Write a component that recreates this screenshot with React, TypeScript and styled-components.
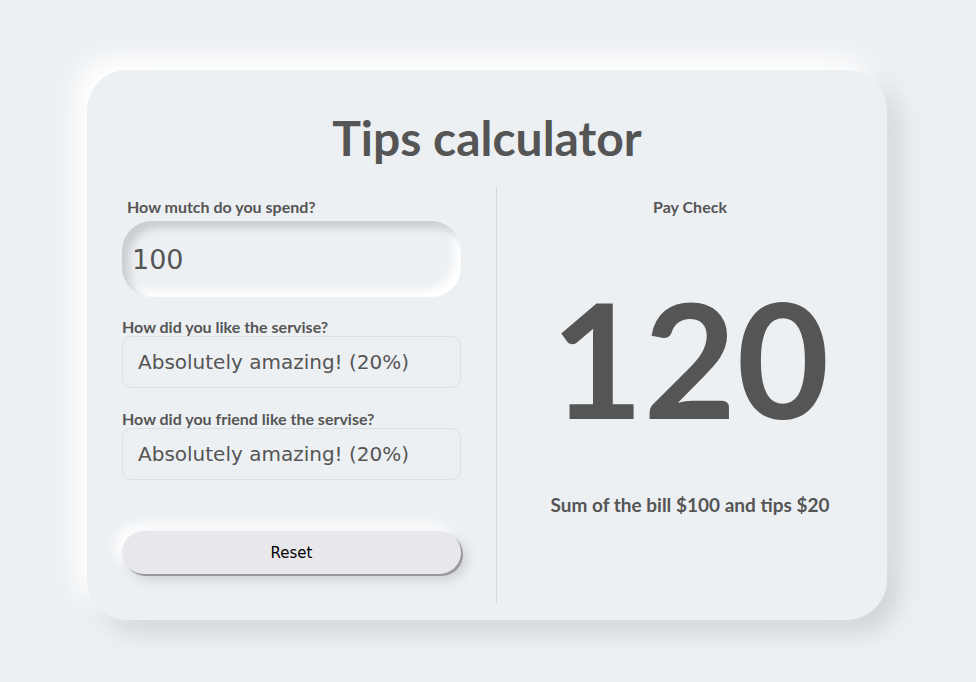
import styled, { createGlobalStyle } from "styled-components";
import { useState } from "react";

const Global = createGlobalStyle`
  html, body {
    margin: 0;
    padding: 0;
    background: #edf0f3;
  }
  body {
    font-family: Lato, "Noto Sans", sans-serif;
    color: #555;
  }
`;

const Page = styled.div`
  width: 976px;
  height: 682px;
  padding-top: 70px;
  box-sizing: border-box;
  display: flex;
  justify-content: center;
  padding-left: 11px;
  padding-right: 13px;
`;

const Card = styled.div`
  width: 800px;
  height: 550px;
  box-sizing: border-box;
  border-radius: 40px;
  background: #edf0f3;
  box-shadow: -12px -12px 24px #ffffff, 12px 12px 24px #cfd3d8;
  display: flex;
  flex-direction: column;
  padding-bottom: 17px;
`;

const Title = styled.h1`
  margin: 35px 0 0;
  height: 82px;
  font-size: 48px;
  font-weight: 700;
  text-align: center;
  line-height: 66px;
  color: #555;
`;

const Columns = styled.div`
  flex: 1;
  display: flex;
`;

const Left = styled.div`
  width: 410px;
  box-sizing: border-box;
  padding: 11px 35px 0;
  border-right: 1px solid #d6d9dd;
  display: flex;
  flex-direction: column;
`;

const Right = styled.div`
  flex: 1;
  display: flex;
  flex-direction: column;
  align-items: center;
  padding: 11px 4px 0 0;
`;

const Label = styled.label<{ $indent?: number }>`
  font-size: 16px;
  font-weight: 700;
  line-height: 18px;
  padding-left: ${(p) => p.$indent ?? 0}px;
  color: #555;
`;

const AmountInput = styled.input`
  margin-top: 5px;
  height: 76px;
  width: 100%;
  box-sizing: border-box;
  border: none;
  outline: none;
  border-radius: 30px;
  background: #edf0f3;
  box-shadow: inset 7px 7px 9px #c9cdd2, inset -7px -7px 9px #ffffff;
  padding: 0 10px;
  font-family: "DejaVu Sans", Verdana, sans-serif;
  font-size: 27px;
  color: #555;
`;

const Select = styled.select<{ $gap: number }>`
  margin-bottom: ${(p) => p.$gap}px;
  height: 52px;
  width: 100%;
  box-sizing: border-box;
  border: 1px solid #dcdfe3;
  border-radius: 10px;
  background: #edf0f3;
  padding: 0 15px;
  font-family: "DejaVu Sans", Verdana, sans-serif;
  font-size: 20px;
  color: #555;
  appearance: none;
  outline: none;
`;

const ResetButton = styled.button`
  height: 43px;
  width: 100%;
  border: none;
  border-radius: 22px;
  background: #e8e8ec;
  box-shadow: 2px 2px 0 #999, 6px 6px 12px #cdd1d6, -6px -6px 12px #ffffff;
  font-family: "DejaVu Sans", Verdana, sans-serif;
  font-size: 15px;
  color: #000;
  cursor: pointer;
`;

const Heading = styled.div`
  font-size: 16px;
  font-weight: 700;
  line-height: 18px;
`;

const Total = styled.div`
  margin-top: 56px;
  font-size: 160px;
  font-weight: 700;
  line-height: 170px;
  color: #555;
`;

const Summary = styled.div`
  margin-top: 52px;
  font-size: 19px;
  font-weight: 700;
  line-height: 22px;
`;

const options = [
  { value: 0.2, label: "Absolutely amazing! (20%)" },
  { value: 0.1, label: "It was good (10%)" },
  { value: 0.05, label: "It was okay (5%)" },
  { value: 0, label: "Bad (0%)" },
];

export default function App() {
  const [bill, setBill] = useState("100");
  const [mine, setMine] = useState(0.2);
  const [friend, setFriend] = useState(0.2);

  const amount = Number(bill) || 0;
  const tips = Math.round((amount * (mine + friend)) / 2);

  return (
    <>
      <Global />
      <Page>
        <Card>
          <Title>Tips calculator</Title>
          <Columns>
            <Left>
              <Label $indent={5}>How mutch do you spend?</Label>
              <AmountInput value={bill} onChange={(e) => setBill(e.target.value)} />
              <div style={{ height: 21 }} />
              <Label>How did you like the servise?</Label>
              <Select $gap={22} value={mine} onChange={(e) => setMine(Number(e.target.value))}>
                {options.map((o) => (
                  <option key={o.value} value={o.value}>{o.label}</option>
                ))}
              </Select>
              <Label>How did you friend like the servise?</Label>
              <Select $gap={51} value={friend} onChange={(e) => setFriend(Number(e.target.value))}>
                {options.map((o) => (
                  <option key={o.value} value={o.value}>{o.label}</option>
                ))}
              </Select>
              <ResetButton
                onClick={() => {
                  setBill("100");
                  setMine(0.2);
                  setFriend(0.2);
                }}
              >
                Reset
              </ResetButton>
            </Left>
            <Right>
              <Heading>Pay Check</Heading>
              <Total>{amount + tips}</Total>
              <Summary>
                Sum of the bill ${amount} and tips ${tips}
              </Summary>
            </Right>
          </Columns>
        </Card>
      </Page>
    </>
  );
}
